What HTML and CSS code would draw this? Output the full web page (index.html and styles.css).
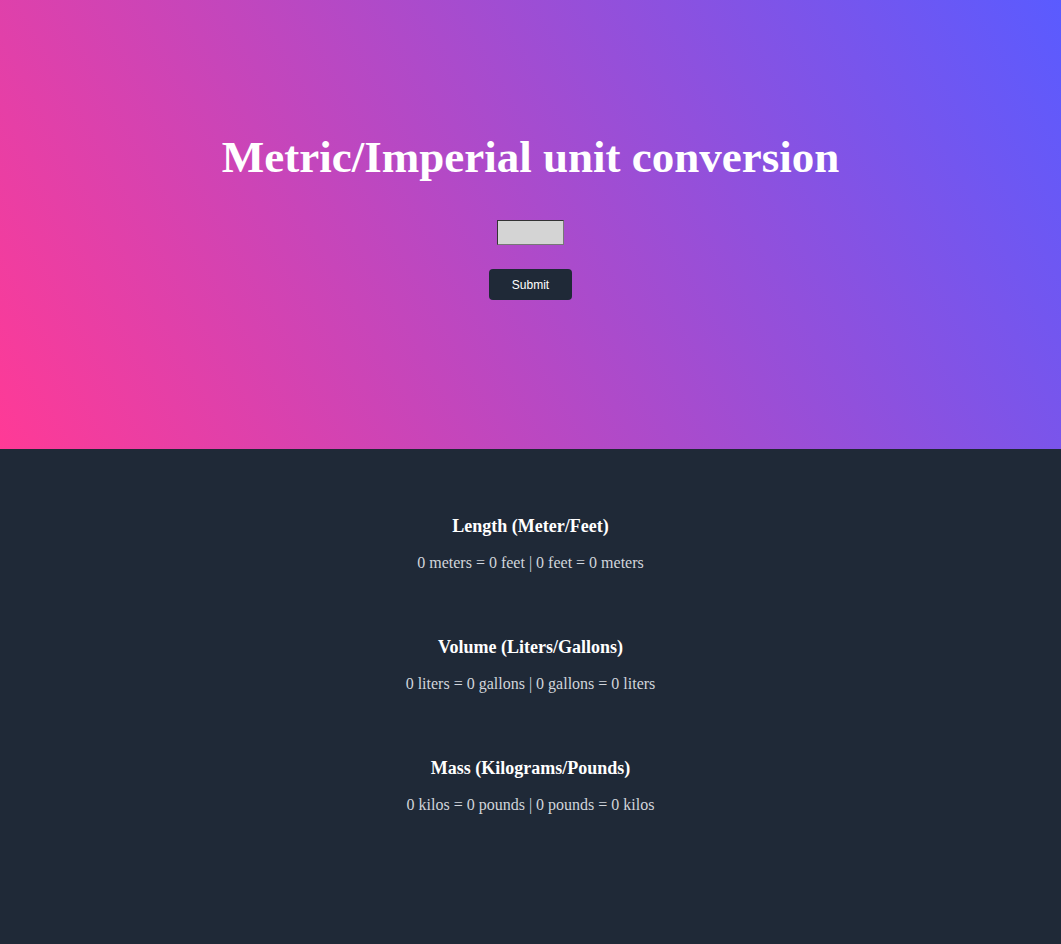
FILE: index.html
```html
<!DOCTYPE html>
<html>
<head>
<meta charset="utf-8">
<link rel="stylesheet" href="styles.css">
</head>
<body>
<header class="hero">
  <h1 class="title">Metric/Imperial unit conversion</h1>
  <input class="num-input" type="text">
  <button class="submit-btn">Submit</button>
</header>
<main class="results">
  <section class="group">
    <h2 class="group-title">Length (Meter/Feet)</h2>
    <p class="group-text">0 meters = 0 feet | 0 feet = 0 meters</p>
  </section>
  <section class="group">
    <h2 class="group-title">Volume (Liters/Gallons)</h2>
    <p class="group-text">0 liters = 0 gallons | 0 gallons = 0 liters</p>
  </section>
  <section class="group">
    <h2 class="group-title">Mass (Kilograms/Pounds)</h2>
    <p class="group-text">0 kilos = 0 pounds | 0 pounds = 0 kilos</p>
  </section>
</main>
</body>
</html>
```
FILE: styles.css
```css
html, body {
  margin: 0;
  padding: 0;
}
body {
  font-family: "Liberation Serif", "Times New Roman", serif;
  background: #1f2937;
  min-height: 944px;
}
.hero {
  height: 449px;
  box-sizing: border-box;
  background: linear-gradient(60deg, #ff3a96, #5a5bff);
  display: flex;
  flex-direction: column;
  align-items: center;
  padding-top: 129px;
}
.title {
  margin: 0;
  font-size: 45px;
  line-height: 56px;
  color: #fff;
  font-weight: bold;
}
.num-input {
  margin-top: 35px;
  width: 67px;
  height: 25px;
  box-sizing: border-box;
  background: #d4d4d4;
  border: 1px solid #333;
  border-right-color: #777;
  border-bottom-color: #777;
  padding: 0;
}
.submit-btn {
  margin-top: 24px;
  width: 83px;
  height: 31px;
  background: #1f2937;
  color: #fff;
  border: none;
  border-radius: 4px;
  font-family: "Liberation Sans", Arial, sans-serif;
  font-size: 12px;
  cursor: pointer;
}
.results {
  display: flex;
  flex-direction: column;
  align-items: center;
  padding-top: 64px;
  gap: 59px;
}
.group {
  text-align: center;
}
.group-title {
  margin: 0;
  font-size: 18px;
  line-height: 26px;
  color: #fff;
  font-weight: bold;
}
.group-text {
  margin: 12px 0 0;
  font-size: 16px;
  line-height: 24px;
  color: #d1d5db;
}
```
